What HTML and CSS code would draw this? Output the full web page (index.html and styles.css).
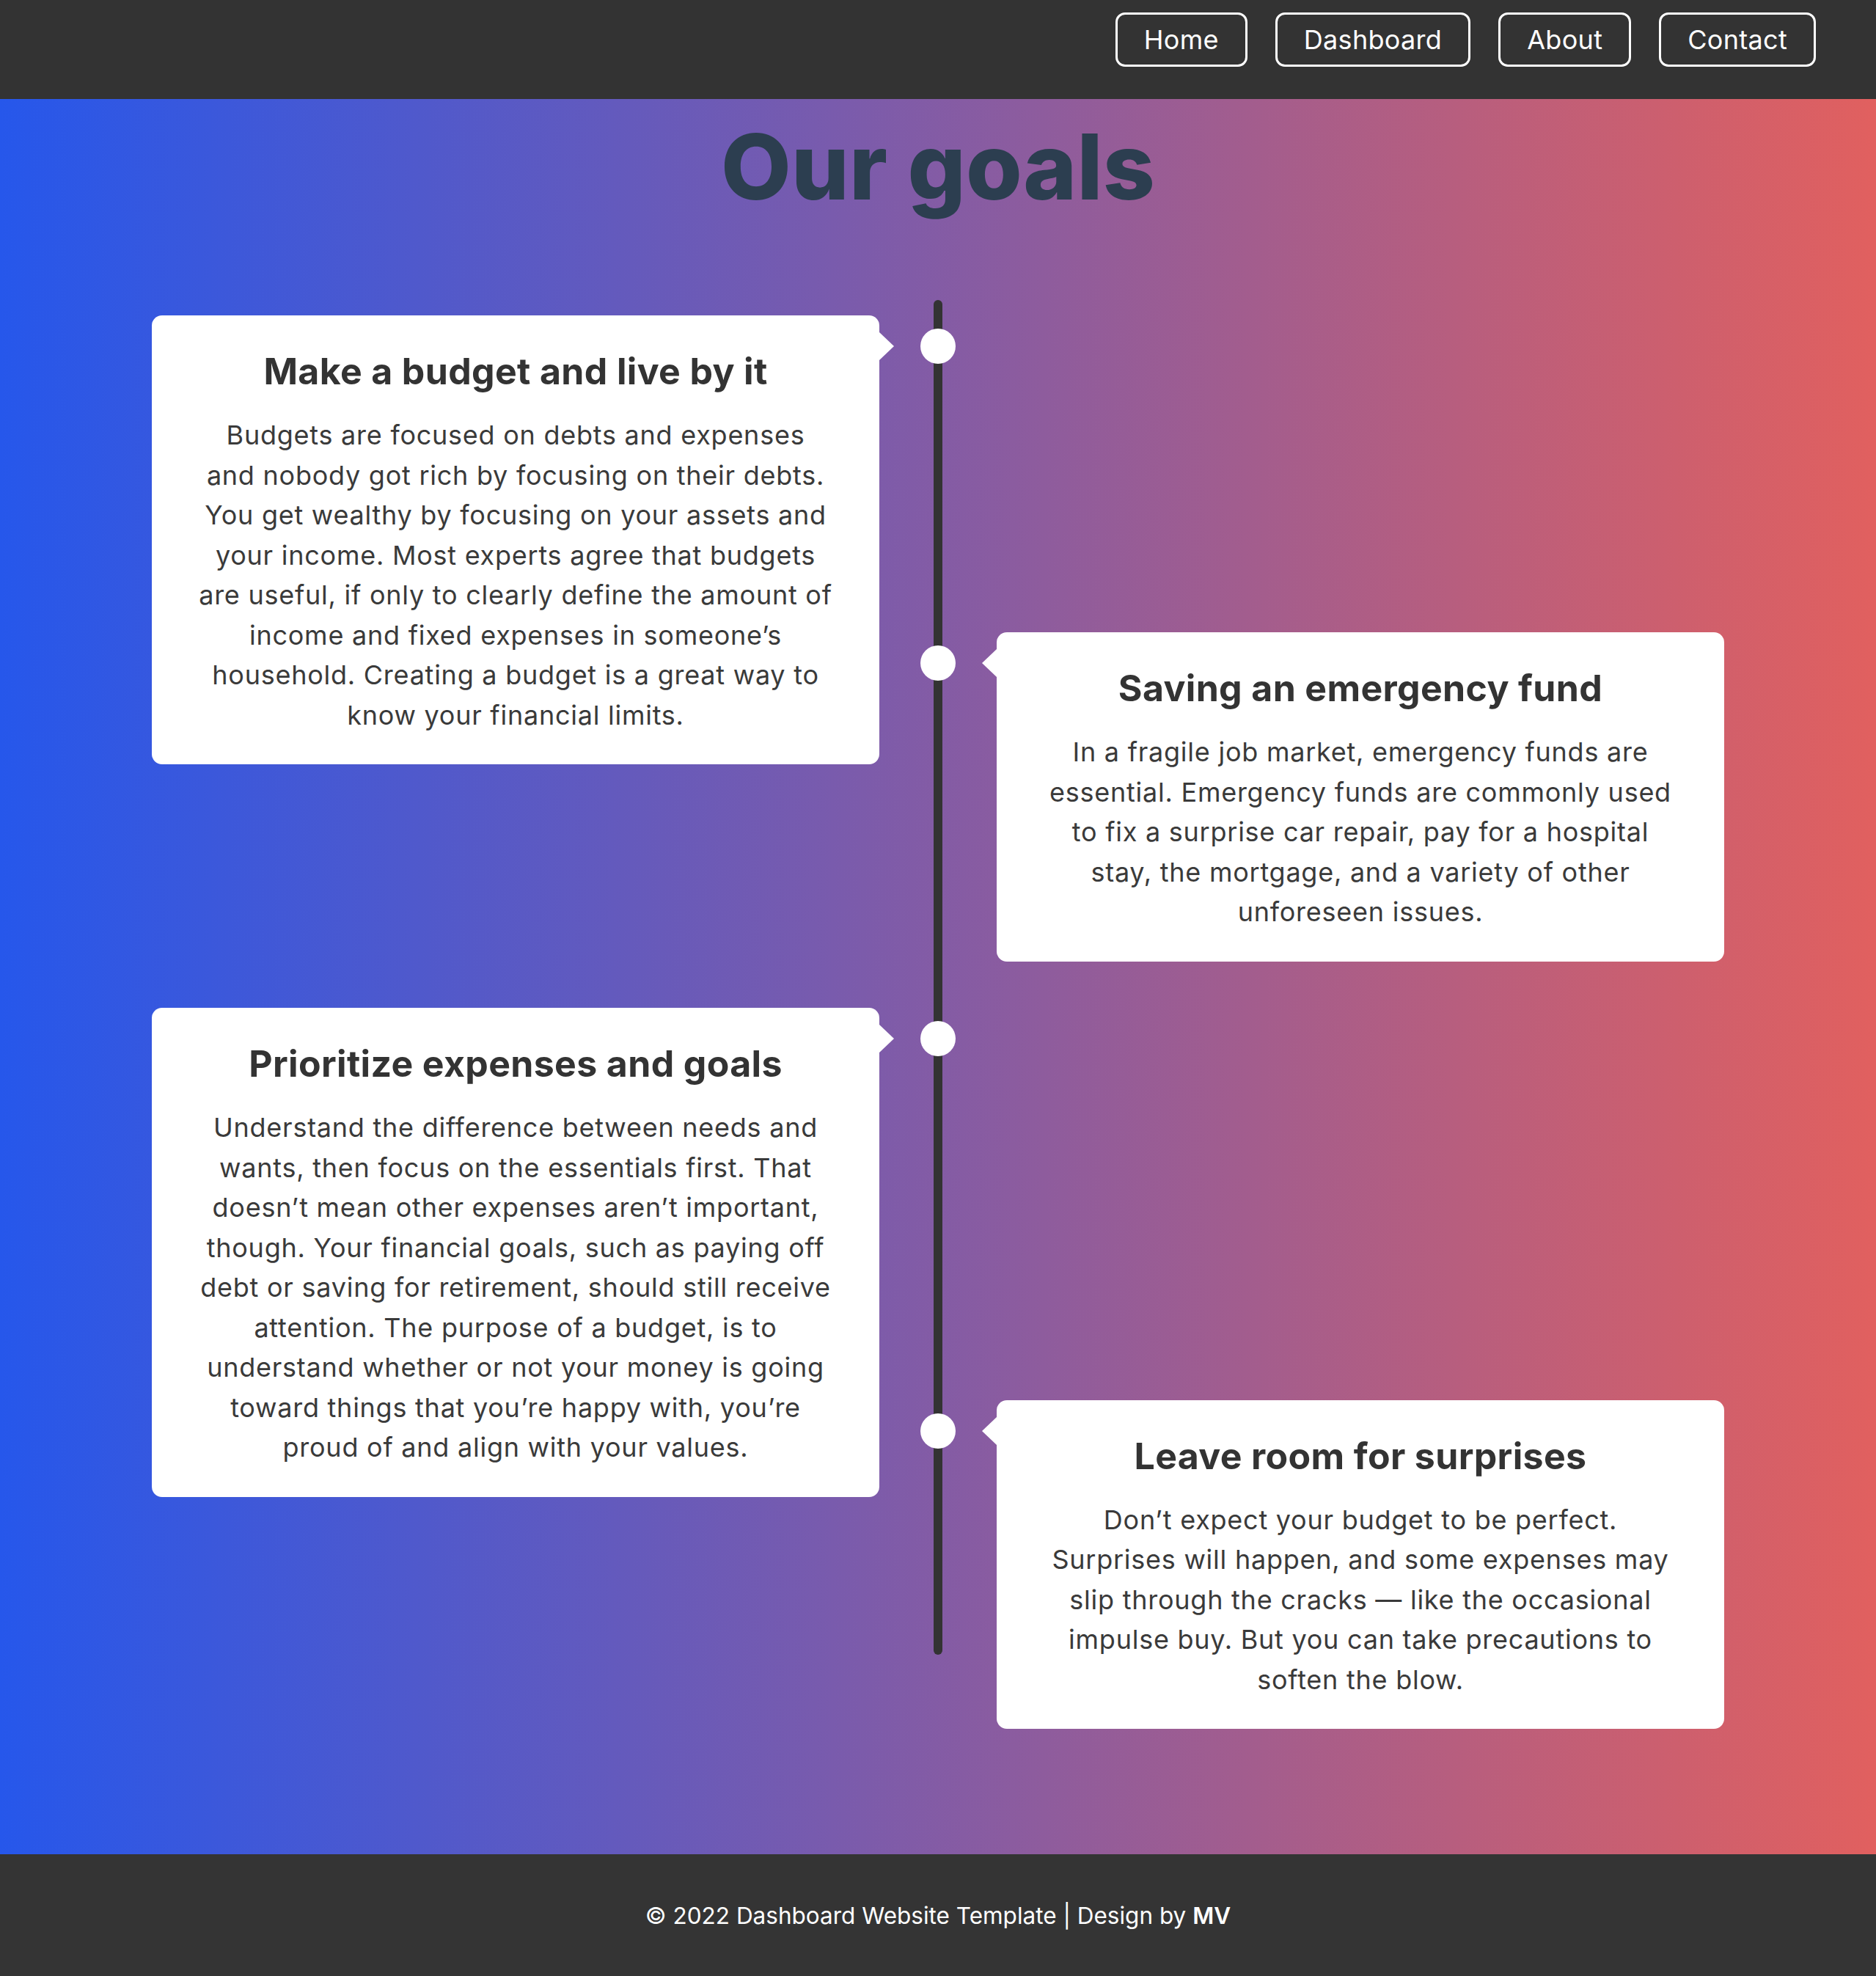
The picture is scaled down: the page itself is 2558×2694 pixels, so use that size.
FILE: index.html
```html
<!DOCTYPE html>
<html lang="en">
<head>
<meta charset="utf-8">
<title>Our goals</title>
<link rel="stylesheet" href="styles.css">
</head>
<body>
<header class="topbar">
  <nav class="nav">
    <a class="nav-btn" href="#">Home</a>
    <a class="nav-btn" href="#">Dashboard</a>
    <a class="nav-btn" href="#">About</a>
    <a class="nav-btn" href="#">Contact</a>
  </nav>
</header>
<main class="main">
  <h1 class="title">Our goals</h1>
  <section class="timeline">
    <div class="col col-left">
      <article class="card card-left">
        <h2 class="card-title">Make a budget and live by it</h2>
        <p class="card-text">Budgets are focused on debts and expenses<br>and nobody got rich by focusing on their debts.<br>You get wealthy by focusing on your assets and<br>your income. Most experts agree that budgets<br>are useful, if only to clearly define the amount of<br>income and fixed expenses in someone’s<br>household. Creating a budget is a great way to<br>know your financial limits.</p>
      </article>
      <article class="card card-left card-third">
        <h2 class="card-title">Prioritize expenses and goals</h2>
        <p class="card-text">Understand the difference between needs and<br>wants, then focus on the essentials first. That<br>doesn’t mean other expenses aren’t important,<br>though. Your financial goals, such as paying off<br>debt or saving for retirement, should still receive<br>attention. The purpose of a budget, is to<br>understand whether or not your money is going<br>toward things that you’re happy with, you’re<br>proud of and align with your values.</p>
      </article>
    </div>
    <div class="col col-right">
      <article class="card card-right">
        <h2 class="card-title">Saving an emergency fund</h2>
        <p class="card-text">In a fragile job market, emergency funds are<br>essential. Emergency funds are commonly used<br>to fix a surprise car repair, pay for a hospital<br>stay, the mortgage, and a variety of other<br>unforeseen issues.</p>
      </article>
      <article class="card card-right card-fourth">
        <h2 class="card-title">Leave room for surprises</h2>
        <p class="card-text">Don’t expect your budget to be perfect.<br>Surprises will happen, and some expenses may<br>slip through the cracks — like the occasional<br>impulse buy. But you can take precautions to<br>soften the blow.</p>
      </article>
    </div>
  </section>
</main>
<footer class="footer">
  <p class="footer-text">© 2022 Dashboard Website Template | Design by <strong class="footer-strong">MV</strong></p>
</footer>
</body>
</html>
```
FILE: styles.css
```css
* { box-sizing: border-box; }
html, body { margin: 0; padding: 0; }
body {
  font-family: Inter, "Noto Sans", sans-serif;
  color: #333;
  background: #333;
  width: 2558px;
}

.topbar {
  height: 135px;
  background: #333;
  display: flex;
  justify-content: flex-end;
  align-items: flex-start;
  padding: 17px 82px 0 0;
}
.nav { display: flex; gap: 38px; }
.nav-btn {
  display: flex;
  align-items: center;
  justify-content: center;
  height: 74px;
  border: 3px solid #fff;
  border-radius: 13px;
  color: #fff;
  text-decoration: none;
  font-size: 36px;
  padding: 0 36px;
  letter-spacing: 0.3px;
}

.main {
  background: linear-gradient(90deg, #2657eb 0%, #e1605f 100%);
  padding: 20px 0 171px;
}
.title {
  margin: 0;
  text-align: center;
  font-size: 124px;
  line-height: 144px;
  font-weight: 800;
  color: #2c3e50;
  letter-spacing: 0.2px;
}

.timeline {
  position: relative;
  width: 2144px;
  margin: 110px auto 0;
  display: grid;
  grid-template-columns: 1fr 1fr;
}
.timeline::before {
  content: "";
  position: absolute;
  left: calc(50% - 6px);
  top: 0;
  bottom: 101px;
  width: 12px;
  border-radius: 6px;
  background: #333;
}
.col { display: flex; flex-direction: column; }
.col-left { padding: 21px 80px 0 0; }
.col-right { padding: 453px 0 0 80px; }
.card-third { margin-top: 332px; }
.card-fourth { margin-top: 598px; }

.card {
  position: relative;
  background: #fff;
  border-radius: 14px;
  padding: 40px 30px;
  text-align: center;
}
.card::before {
  content: "";
  position: absolute;
  top: 23px;
  border-top: 19px solid transparent;
  border-bottom: 19px solid transparent;
}
.card::after {
  content: "";
  position: absolute;
  top: 18px;
  width: 48px;
  height: 48px;
  border-radius: 50%;
  background: #fff;
  z-index: 1;
}
.card-left::before { right: -20px; border-left: 20px solid #fff; }
.card-left::after { right: -104px; }
.card-right::before { left: -20px; border-right: 20px solid #fff; }
.card-right::after { left: -104px; }

.card-title {
  margin: 0 0 24px;
  font-size: 50px;
  line-height: 72px;
  font-weight: 700;
  color: #333;
  letter-spacing: 0.35px;
}
.card-text {
  margin: 0;
  font-size: 36px;
  line-height: 54.5px;
  color: #3a3a3a;
  letter-spacing: 0.75px;
}

.footer {
  height: 167px;
  background: #343434;
  display: flex;
  align-items: center;
  justify-content: center;
}
.footer-text {
  margin: 0;
  color: #fff;
  font-size: 31.5px;
}
.footer-strong { font-weight: 600; }
```
